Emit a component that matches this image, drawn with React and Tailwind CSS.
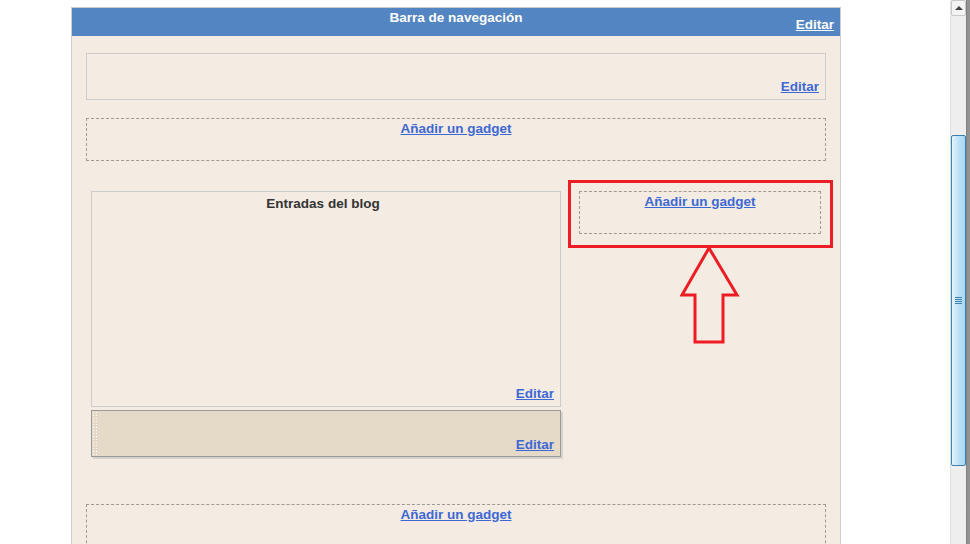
import React from 'react';

const linkCls = 'font-bold text-[13.5px] leading-[15px] text-[#3d68d4] underline cursor-pointer';

const AddGadget = ({ className = '' }) => (
  <div className={`border border-dashed border-[#a09a94] text-center text-[13.5px] leading-[15px] pt-[2px] ${className}`}>
    <span className={linkCls}>Añadir un gadget</span>
  </div>
);

const EditLink = ({ white }) => (
  <span className={white ? 'font-bold text-[13.5px] leading-[15px] text-white underline' : linkCls}>Editar</span>
);

const Scrollbar = () => (
  <div className="w-[20px] h-full flex">
    <div className="w-[16px] h-full bg-[#eeeeee] border-l border-[#e2e2e2] flex flex-col">
      <div className="h-[16px] w-[15px] bg-[#f4f4f4] border border-[#c8c8c8] rounded-[2px] flex items-center justify-center">
        <div className="w-0 h-0 border-x-[4px] border-x-transparent border-b-[4px] border-b-[#444]" />
      </div>
      <div className="mt-[119px] h-[331px] w-[15px] rounded-[2px] border border-[#3c7fb1] bg-gradient-to-r from-[#e3f3fc] via-[#bfe2f7] to-[#a9d6f2] flex flex-col items-center justify-center gap-[1px]">
        <div className="w-[7px] h-[1px] bg-[#3c7fb1]" />
        <div className="w-[7px] h-[1px] bg-[#3c7fb1]" />
        <div className="w-[7px] h-[1px] bg-[#3c7fb1]" />
        <div className="w-[7px] h-[1px] bg-[#3c7fb1]" />
      </div>
    </div>
    <div className="w-[4px] h-full bg-gradient-to-r from-[#7a7a7a] via-[#9a9a9a] to-[#8a8a8a]" />
  </div>
);

export default function App() {
  return (
    <div className="flex w-[970px] h-[544px] overflow-hidden bg-white font-['Liberation_Sans',Arial,sans-serif]">
      <div className="relative flex-1 h-full">
        <div className="ml-[71px] mt-[7px] w-[770px] h-[600px] border-x border-t border-[#cccccc] bg-[#f4ece3]">
          <div className="relative h-[28px] bg-[#5385c2] text-center text-[13.5px] leading-[15px] pt-[2px]">
            <span className="font-bold text-[13.5px] leading-[15px] text-white">Barra de navegación</span>
            <div className="absolute right-[6px] bottom-[4px]"><EditLink white /></div>
          </div>

          <div className="mx-[14px] mt-[17px] h-[47px] border border-[#cccccc] flex items-end justify-end pr-[6px] pb-[5px]">
            <EditLink />
          </div>

          <AddGadget className="mx-[14px] mt-[18px] h-[43px]" />

          <div className="flex mt-[30px] ml-[19px] gap-[18px]">
            <div className="w-[470px] flex flex-col gap-[3px]">
              <div className="h-[216px] border border-[#cccccc] flex flex-col pt-[4px] pr-[6px] pb-[5px]">
                <div className="text-center font-bold text-[13.5px] leading-[15px] text-[#333333]">Entradas del blog</div>
                <div className="flex-1" />
                <div className="text-right text-[13.5px] leading-[15px]"><EditLink /></div>
              </div>
              <div className="h-[47px] border border-[#9a9a9a] bg-[#e5dac8] shadow-[2px_2px_0_#d8d2cc] flex">
                <div className="w-[5px] h-full bg-[radial-gradient(circle,#ffffff_1px,transparent_1px)] bg-[length:3px_3px]" />
                <div className="flex-1 flex items-end justify-end pr-[6px] pb-[4px]">
                  <EditLink />
                </div>
              </div>
            </div>
            <AddGadget className="w-[242px] h-[43px]" />
          </div>

          <AddGadget className="mx-[14px] mt-[47px] h-[60px]" />
        </div>

        <div className="absolute left-[568px] top-[180px] w-[265px] h-[68px] border-[3px] border-[#ee1c24]" />
        <svg className="absolute left-[680px] top-[246px]" width="60" height="100" viewBox="0 0 60 100">
          <polygon
            points="29,2 57,49 43,49 43,96 15,96 15,49 2,49"
            fill="none"
            stroke="#ee1c24"
            strokeWidth="3"
            strokeLinejoin="miter"
          />
        </svg>
      </div>
      <Scrollbar />
    </div>
  );
}
